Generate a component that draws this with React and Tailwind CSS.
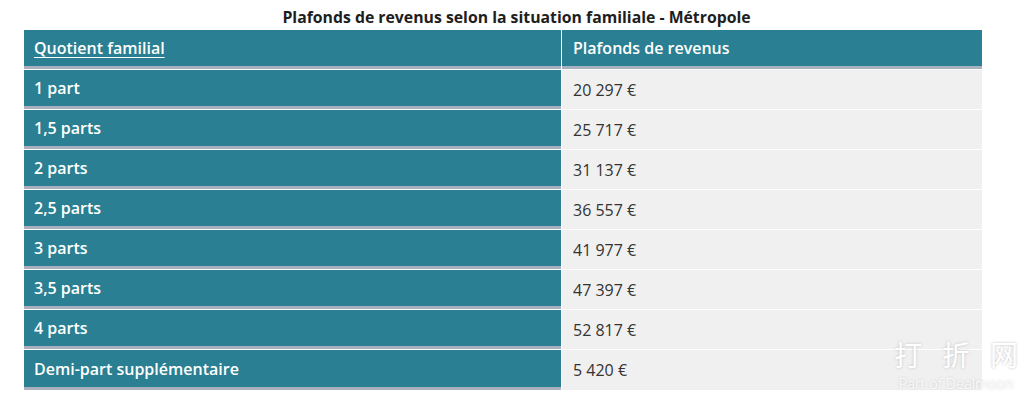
const rows = [
  ['1 part', '20 297 €'],
  ['1,5 parts', '25 717 €'],
  ['2 parts', '31 137 €'],
  ['2,5 parts', '36 557 €'],
  ['3 parts', '41 977 €'],
  ['3,5 parts', '47 397 €'],
  ['4 parts', '52 817 €'],
  ['Demi-part supplémentaire', '5 420 €'],
];

export default function App() {
  return (
    <div className="relative w-[1033px] h-[405px] bg-white font-['Open_Sans',sans-serif] overflow-hidden">
      <div className="h-[30px] flex items-center justify-center pt-[6px] text-[15.8px] font-bold text-[#1e1e1e]">
        Plafonds de revenus selon la situation familiale - Métropole
      </div>
      <div className="ml-[24px] w-[958px] flex flex-col">
        {/* entête */}
        <div className="flex h-[40px] border-b border-white">
          <div className="w-[537px] bg-[#2a7f92] border-b-[3px] border-[#a9b0be] text-white text-[16px] font-semibold flex items-center pl-[10px]">
            <span className="underline underline-offset-[3px]">Quotient familial</span>
          </div>
          <div className="w-px bg-white" />
          <div className="flex-1 bg-[#2a7f92] border-b-[3px] border-[#a9b0be] text-white text-[16px] font-semibold flex items-center pl-[11px]">
            Plafonds de revenus
          </div>
        </div>
        {rows.map(([label, value], i) => (
          <div key={i} className={`flex h-[40px] ${i < rows.length - 1 ? 'border-b border-white' : ''}`}>
            <div className="w-[537px] bg-[#2a7f92] border-b-[3px] border-[#a9b0be] text-white text-[16px] font-semibold flex items-center pl-[10px]">
              {label}
            </div>
            <div className="w-px bg-white" />
            <div className="flex-1 bg-[#f0f0f0] text-[#333] text-[16px] flex items-center pl-[11px]">
              {value}
            </div>
          </div>
        ))}
      </div>
      {/* filigrane */}
      <div className="absolute left-[893px] top-[340px] w-[126px] flex flex-col items-center text-white [text-shadow:0_0_3px_#bdbdbd]">
        <div className="flex gap-[20px] text-[28px] leading-none font-['Noto_Sans_CJK_SC',sans-serif]">
          <span>打</span><span>折</span><span>网</span>
        </div>
        <div className="text-[14.5px] font-light mt-[9px] leading-none whitespace-nowrap">Part of Dealmoon</div>
      </div>
    </div>
  );
}
